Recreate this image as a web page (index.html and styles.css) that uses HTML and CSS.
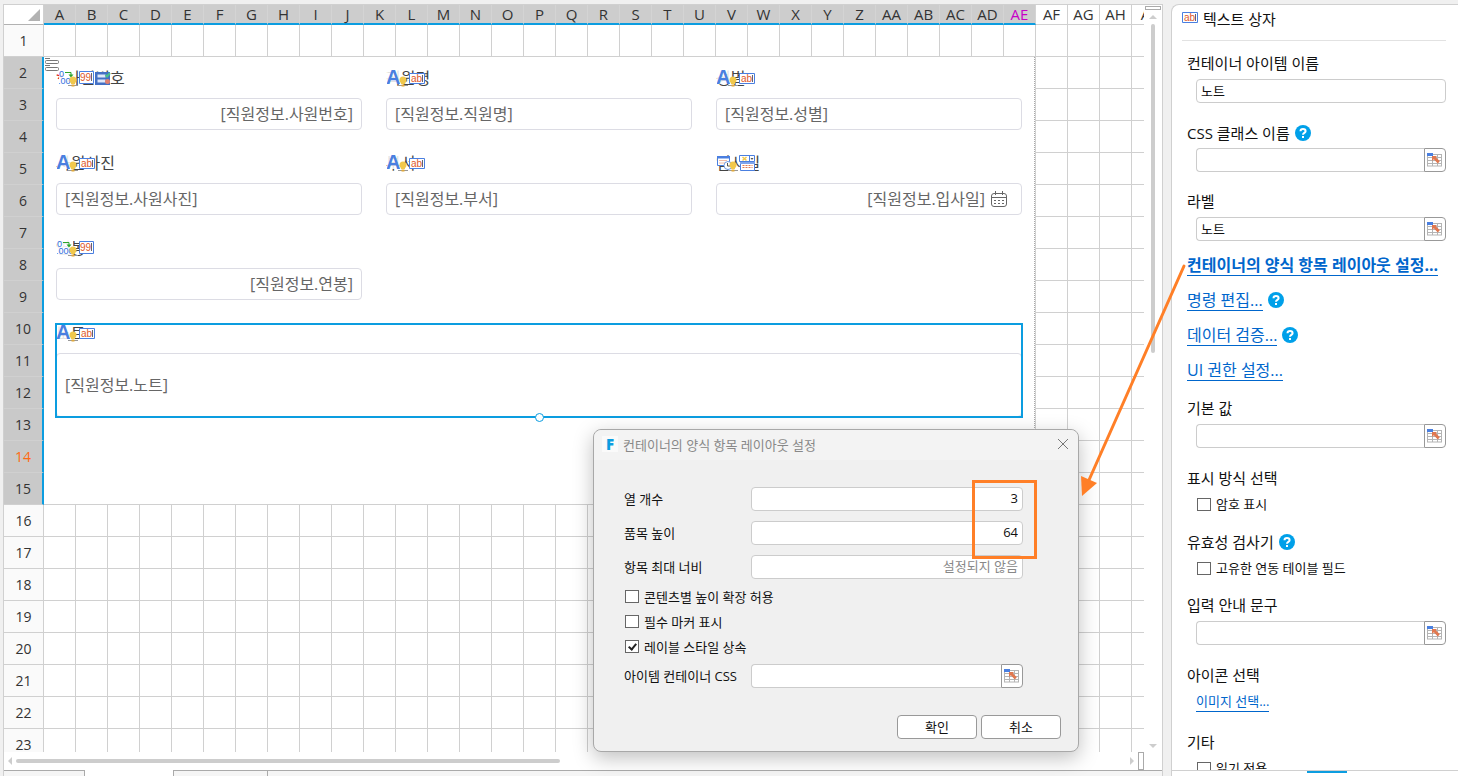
FILE: index.html
```
<!DOCTYPE html>
<html lang="ko">
<head>
    <meta charset="UTF-8">
    <meta name="viewport" content="width=device-width, initial-scale=1.0">
    <title>컨테이너의 양식 항목 레이아웃 설정</title>
    <link rel="stylesheet" href="styles.css">
</head>
<body>
    <!-- shared icons -->
    <svg class="sprite" aria-hidden="true">
        <symbol id="icon-a" viewBox="0 0 16 16">
            <path d="M0 0h14v14H0z" fill="#fff" opacity=".85"/>
            <text x="-1" y="14" class="glyph-a">A</text>
        </symbol>
        <symbol id="icon-number" viewBox="0 0 16 16">
            <path d="M0 0h16v15H0z" fill="#fff" opacity=".9"/>
            <text x="0" y="7" class="glyph-digits">0</text>
            <text x="-1" y="14" class="glyph-digits">.000</text>
            <path d="M6 2.500h6v3" fill="none" stroke="#2aa52a"/>
            <path d="M9.500 4.500h5l-2.500 3z" fill="#2aa52a"/>
        </symbol>
        <symbol id="icon-date" viewBox="0 0 16 16">
            <path d="M.5 1.500h12v9H.5z" fill="#fff" stroke="#4a7fe0"/>
            <path d="M0 1h13v2.500H0z" fill="#4a7fe0"/>
            <path d="M2.500 5.500h8M2.500 8h8" stroke="#e07850" stroke-dasharray="1 1"/>
            <circle cx="11" cy="10.500" r="4" fill="#fff" stroke="#6f9be8"/>
            <path d="M10.500 8v3H13" fill="none" stroke="#555"/>
        </symbol>
        <symbol id="icon-bulb" viewBox="0 0 10 11">
            <path d="M0 9.500h10" stroke="#999"/>
            <path d="M5 .5a3.500 3.500 0 0 1 3.500 3.500c0 1.500-.8 2.500-1.500 3v1H3V7c-.7-.5-1.500-1.500-1.500-3A3.500 3.500 0 0 1 5 .5z" fill="#f1c84c"/>
            <path d="M3.500 9.500h3" stroke="#e0a93a" stroke-width="2"/>
        </symbol>
        <symbol id="icon-ab" viewBox="0 0 16 12">
            <path d="M.5.5h15v10H.5z" fill="#fff" stroke="#4a7fe0"/>
            <text x="2" y="9" class="glyph-box">ab</text>
            <path d="M13.500 2v7" stroke="#666"/>
        </symbol>
        <symbol id="icon-99" viewBox="0 0 16 14">
            <path d="M.5.5h14v12H.5z" fill="#fff" stroke="#4a7fe0"/>
            <text x="1" y="10" class="glyph-box">99</text>
            <path d="M12.500 2v8" stroke="#666"/>
        </symbol>
        <symbol id="icon-list" viewBox="0 0 16 14">
            <path d="M0 0h15v13H0z" fill="#4470c4"/>
            <path d="M2.500 2.500h8v3h-8zM2.500 7.500h8v3h-8z" fill="#dfe8f8"/>
            <path d="M10.500 3l1.500 1.500 3-3.500" fill="none" stroke="#4cc08a" stroke-width="2"/>
            <circle cx="12.500" cy="9.500" r="2.500" fill="#e08070"/>
        </symbol>
        <symbol id="icon-datebox" viewBox="0 0 17 16">
            <path d="M.5.5h15v6H.5z" fill="#fff" stroke="#4a7fe0"/>
            <path d="M10.500 1v5" stroke="#4a7fe0"/>
            <path d="M3.500 2l4 3.500M7.500 2l-4 3.500" stroke="#f1c84c" stroke-width="1.500"/>
            <path d="M11.500 3h3l-1.500 2z" fill="#555"/>
            <path d="M1.500 7.500h14v8h-14z" fill="#fff" stroke="#4a7fe0"/>
            <path d="M1 7h15v2H1z" fill="#7ea4ea"/>
            <path d="M3.500 10.500h10M3.500 12.500h10" stroke="#e07850" stroke-dasharray="2 1"/>
        </symbol>
        <symbol id="icon-cellref" viewBox="0 0 16 14">
            <path d="M0 1.500h15M0 4.500h15M0 7.500h15M0 10.500h15M0 13h15M.5 1v12M5.500 1v12M10.500 1v12M14.500 1v12" stroke="#b4b4b4"/>
            <path d="M0 0h6v3H0z" fill="#4a7fe0"/>
            <path d="M5 3h5L8.800 4.300l4 4-2 2.200-4-4.200L5 8z" fill="#e07850"/>
        </symbol>
        <symbol id="icon-calendar" viewBox="0 0 16 16">
            <rect x=".5" y="2.500" width="15" height="13" rx="2.500" fill="none" stroke="#666"/>
            <path d="M4.500 0v4M11.500 0v4M.5 6.500h15" stroke="#666"/>
            <path d="M3 9.500h10M3 12.500h10" stroke="#666" stroke-dasharray="2 2"/>
        </symbol>
        <symbol id="icon-help" viewBox="0 0 16 16">
            <circle cx="8" cy="8" r="8" fill="#00a0e9"/>
            <path d="M5.500 6.300C5.500 4.700 6.500 4 8 4s2.600.8 2.600 2.200C10.600 7.800 8 7.900 8 9.700" fill="none" stroke="#fff" stroke-width="2"/>
            <path d="M7 11h2v2H7z" fill="#fff"/>
        </symbol>
    </svg>

    <main class="workbook">
        <div class="grid-area">
            <div class="grid">
                <div class="column-heads">
                    <span class="corner"><svg width="12" height="12" viewBox="0 0 12 12"><path d="M12 0v12H0z" fill="#b2b2b2"/></svg></span>
                    <span class="selected">A</span><span class="selected">B</span><span class="selected">C</span><span class="selected">D</span><span class="selected">E</span><span class="selected">F</span><span class="selected">G</span><span class="selected">H</span><span class="selected">I</span><span class="selected">J</span><span class="selected">K</span><span class="selected">L</span><span class="selected">M</span><span class="selected">N</span><span class="selected">O</span><span class="selected">P</span><span class="selected">Q</span><span class="selected">R</span><span class="selected">S</span><span class="selected">T</span><span class="selected">U</span><span class="selected">V</span><span class="selected">W</span><span class="selected">X</span><span class="selected">Y</span><span class="selected">Z</span><span class="selected">AA</span><span class="selected">AB</span><span class="selected">AC</span><span class="selected">AD</span><span class="selected last-column">AE</span><span>AF</span><span>AG</span><span>AH</span><span>AI</span>
                </div>
                <div class="grid-body">
                    <div class="row-heads">
                        <span>1</span>
                        <span class="selected">2</span>
                        <span class="selected">3</span>
                        <span class="selected">4</span>
                        <span class="selected">5</span>
                        <span class="selected">6</span>
                        <span class="selected">7</span>
                        <span class="selected">8</span>
                        <span class="selected">9</span>
                        <span class="selected">10</span>
                        <span class="selected">11</span>
                        <span class="selected">12</span>
                        <span class="selected">13</span>
                        <span class="selected current-row">14</span>
                        <span class="selected">15</span>
                        <span>16</span>
                        <span>17</span>
                        <span>18</span>
                        <span>19</span>
                        <span>20</span>
                        <span>21</span>
                        <span>22</span>
                        <span>23</span>
                    </div>
                    <div class="cells">
                        <form class="container-form">
                            <svg class="form-mark" width="14" height="14" viewBox="0 0 14 14"><path d="M0 .5h5M0 7.500h5" stroke="#777"/><rect x=".5" y="2.500" width="13" height="3" rx="1" fill="#fff" stroke="#777"/><rect x=".5" y="9.500" width="13" height="3" rx="1" fill="#fff" stroke="#777"/></svg>

                            <div class="item">
                                <label for="empNo"><span class="required">*</span>사원번호</label>
                                <svg class="badges" width="56" height="18"><use href="#icon-number" x="2" width="16" height="16"/><use href="#icon-bulb" x="11" y="6" width="10" height="11"/><use href="#icon-99" x="22" y="1" width="16" height="14"/><use href="#icon-list" x="38" y="2" width="16" height="14"/></svg>
                                <div class="box"><input class="number" id="empNo" type="text" value="[직원정보.사원번호]" readonly></div>
                            </div>
                            <div class="item">
                                <label for="empName">직원명</label>
                                <svg class="badges" width="56" height="18"><use href="#icon-a" width="16" height="16"/><use href="#icon-bulb" x="11" y="6" width="10" height="11"/><use href="#icon-ab" x="22" y="3" width="16" height="12"/></svg>
                                <div class="box"><input id="empName" type="text" value="[직원정보.직원명]" readonly></div>
                            </div>
                            <div class="item">
                                <label for="gender">성별</label>
                                <svg class="badges" width="56" height="18"><use href="#icon-a" width="16" height="16"/><use href="#icon-bulb" x="11" y="6" width="10" height="11"/><use href="#icon-ab" x="22" y="3" width="16" height="12"/></svg>
                                <div class="box"><input id="gender" type="text" value="[직원정보.성별]" readonly></div>
                            </div>
                            <div class="item">
                                <label for="photo">사원사진</label>
                                <svg class="badges" width="56" height="18"><use href="#icon-a" width="16" height="16"/><use href="#icon-bulb" x="11" y="6" width="10" height="11"/><use href="#icon-ab" x="22" y="3" width="16" height="12"/></svg>
                                <div class="box"><input id="photo" type="text" value="[직원정보.사원사진]" readonly></div>
                            </div>
                            <div class="item">
                                <label for="dept">부서</label>
                                <svg class="badges" width="56" height="18"><use href="#icon-a" width="16" height="16"/><use href="#icon-bulb" x="11" y="6" width="10" height="11"/><use href="#icon-ab" x="22" y="3" width="16" height="12"/></svg>
                                <div class="box"><input id="dept" type="text" value="[직원정보.부서]" readonly></div>
                            </div>
                            <div class="item">
                                <label for="joined">입사일</label>
                                <svg class="badges" width="56" height="18"><use href="#icon-date" width="16" height="16"/><use href="#icon-bulb" x="11" y="6" width="10" height="11"/><use href="#icon-datebox" x="22" y="0" width="17" height="16"/></svg>
                                <div class="box date"><input class="number" id="joined" type="text" value="[직원정보.입사일]" readonly><svg width="16" height="16"><use href="#icon-calendar"/></svg></div>
                            </div>
                            <div class="item">
                                <label for="salary">연봉</label>
                                <svg class="badges" width="56" height="18"><use href="#icon-number" width="16" height="16"/><use href="#icon-bulb" x="11" y="6" width="10" height="11"/><use href="#icon-99" x="22" y="1" width="16" height="14"/></svg>
                                <div class="box"><input class="number" id="salary" type="text" value="[직원정보.연봉]" readonly></div>
                            </div>
                            <div class="item note">
                                <label for="note">노트</label>
                                <svg class="badges" width="56" height="18"><use href="#icon-a" width="16" height="16"/><use href="#icon-bulb" x="11" y="6" width="10" height="11"/><use href="#icon-ab" x="22" y="3" width="16" height="12"/></svg>
                                <div class="box"><input id="note" type="text" value="[직원정보.노트]" readonly></div>
                                <div class="selection"><i class="handle"></i></div>
                            </div>
                        </form>
                    </div>
                </div>
            </div>
            <div class="scroll-y">
                <i class="splitter"></i>
                <i class="arrow-up"></i>
                <div class="track"><i class="thumb"></i></div>
                <i class="arrow-down"></i>
            </div>
        </div>
        <div class="scroll-x">
            <i class="arrow-left"></i>
            <div class="track"><i class="thumb"></i></div>
            <i class="arrow-right"></i>
            <i class="splitter"></i>
        </div>
        <div class="sheet-tabs"><i class="tab first"></i><i class="tab active"></i><i class="tab"></i><i class="rest"></i></div>
    </main>

    <aside class="panel">
        <div class="panel-body">
            <h2><svg width="16" height="12"><use href="#icon-ab"/></svg>텍스트 상자</h2>

            <div class="field">
                <label for="itemName">컨테이너 아이템 이름</label>
                <div class="control"><input id="itemName" type="text" value="노트"></div>
            </div>
            <div class="field">
                <div class="caption"><label for="cssClass">CSS 클래스 이름</label><svg class="help" width="16" height="16"><use href="#icon-help"/></svg></div>
                <div class="control"><input id="cssClass" type="text"><button type="button" aria-label="셀 참조"><svg width="16" height="14"><use href="#icon-cellref"/></svg></button></div>
            </div>
            <div class="field tight">
                <label for="labelText">라벨</label>
                <div class="control"><input id="labelText" type="text" value="노트"><button type="button" aria-label="셀 참조"><svg width="16" height="14"><use href="#icon-cellref"/></svg></button></div>
            </div>

            <div class="links">
                <div class="caption"><a href="#" class="strong">컨테이너의 양식 항목 레이아웃 설정...</a></div>
                <div class="caption"><a href="#">명령 편집...</a><svg class="help" width="16" height="16"><use href="#icon-help"/></svg></div>
                <div class="caption"><a href="#">데이터 검증...</a><svg class="help" width="16" height="16"><use href="#icon-help"/></svg></div>
                <div class="caption"><a href="#">UI 권한 설정...</a></div>
            </div>

            <div class="field">
                <label for="defaultValue">기본 값</label>
                <div class="control"><input id="defaultValue" type="text"><button type="button" aria-label="셀 참조"><svg width="16" height="14"><use href="#icon-cellref"/></svg></button></div>
            </div>
            <div class="field short">
                <div class="caption">표시 방식 선택</div>
                <label class="check"><input type="checkbox">암호 표시</label>
            </div>
            <div class="field short">
                <div class="caption">유효성 검사기<svg class="help" width="16" height="16"><use href="#icon-help"/></svg></div>
                <label class="check"><input type="checkbox">고유한 연동 테이블 필드</label>
            </div>
            <div class="field">
                <label for="placeholderText">입력 안내 문구</label>
                <div class="control"><input id="placeholderText" type="text"><button type="button" aria-label="셀 참조"><svg width="16" height="14"><use href="#icon-cellref"/></svg></button></div>
            </div>
            <div class="field">
                <div class="caption">아이콘 선택</div>
                <div class="check"><a href="#">이미지 선택...</a></div>
            </div>
            <div class="field">
                <div class="caption">기타</div>
                <label class="check"><input type="checkbox">읽기 전용</label>
            </div>
        </div>
        <div class="panel-tabs"><i></i></div>
    </aside>

    <section class="dialog" role="dialog" aria-labelledby="dialogTitle">
        <header>
            <span class="logo">F</span>
            <h1 id="dialogTitle">컨테이너의 양식 항목 레이아웃 설정</h1>
            <button type="button" class="close" aria-label="닫기"><svg width="12" height="12" viewBox="0 0 12 12"><path d="M1 1l10 10M11 1L1 11" stroke="#777"/></svg></button>
        </header>
        <div class="dialog-body">
            <div class="row">
                <label for="columnCount">열 개수</label>
                <div class="control"><input class="number" id="columnCount" type="text" value="3"></div>
            </div>
            <div class="row">
                <label for="itemHeight">품목 높이</label>
                <div class="control"><input class="number" id="itemHeight" type="text" value="64"></div>
            </div>
            <div class="row">
                <label for="maxWidth">항목 최대 너비</label>
                <div class="control"><input class="number" id="maxWidth" type="text" placeholder="설정되지 않음"></div>
            </div>
            <div class="checks">
                <label><input type="checkbox">콘텐츠별 높이 확장 허용</label>
                <label><input type="checkbox">필수 마커 표시</label>
                <label><input type="checkbox" checked>레이블 스타일 상속</label>
            </div>
            <div class="row">
                <label for="containerCss">아이템 컨테이너 CSS</label>
                <div class="control"><input id="containerCss" type="text"><button type="button" aria-label="셀 참조"><svg width="16" height="14"><use href="#icon-cellref"/></svg></button></div>
            </div>
        </div>
        <footer>
            <button type="button">확인</button>
            <button type="button">취소</button>
        </footer>
        <div class="highlight"></div>
        <svg class="pointer" width="110" height="236" viewBox="0 0 110 236">
            <path d="M105 4L10 218" stroke="#ff7f27" stroke-width="3" stroke-linecap="round"/>
            <path d="M2 214l16 7L3 234z" fill="#ff7f27"/>
        </svg>
    </section>
</body>
</html>
```

FILE: styles.css
```
* {
    box-sizing: border-box;
}

body {
    display: flex;
    gap: 8px;
    height: 100vh;
    margin: 0;
    padding: 4px 0 0 3px;
    overflow: hidden;
    background-color: #f0f0f0;
    color: #111;
    font-family: "Open Sans", "Noto Sans CJK KR", sans-serif;
    font-size: 15px;
}

input,
button {
    font-family: inherit;
    font-size: 13px;
    color: inherit;
}

svg {
    flex-shrink: 0;
}

.sprite {
    display: none;
}

/* spreadsheet */
.workbook {
    flex: 1;
    min-width: 0;
    display: flex;
    flex-direction: column;
    border: 1px solid #d0d0d0;
    border-bottom: none;
    background-color: #fff;
}

.grid-area {
    flex: 1;
    min-height: 0;
    display: flex;
}

.grid {
    flex: 1;
    min-width: 0;
    display: flex;
    flex-direction: column;
}

.column-heads {
    display: flex;
    overflow: hidden;
    line-height: 18px;
    color: #333;
}

.column-heads span {
    flex: 0 0 32px;
    height: 20px;
    border-right: 1px solid #d0d0d0;
    border-bottom: 1px solid #d0d0d0;
    text-align: center;
    white-space: nowrap;
}

.column-heads .corner {
    flex-basis: 40px;
    display: flex;
    justify-content: flex-end;
    align-items: center;
    padding-right: 3px;
    border-bottom-color: #b2b2b2;
}

.column-heads .selected {
    background-color: #cdcdcd;
    border-right-color: #d4d4d4;
    border-bottom: 2px solid #0c9de0;
}

.column-heads .last-column {
    color: #c800c8;
}

.grid-body {
    flex: 1;
    min-height: 0;
    display: flex;
    overflow: hidden;
}

.row-heads {
    width: 40px;
    color: #333;
    font-size: 14px;
    line-height: 31px;
    text-align: center;
}

.row-heads span {
    display: block;
    height: 32px;
    border-right: 1px solid #d0d0d0;
    border-bottom: 1px solid #d0d0d0;
    background-color: #fafafa;
}

.row-heads .selected {
    background-color: #c9c9c9;
    border-right: 2px solid #0c9de0;
}

.row-heads .current-row {
    color: #ff6a13;
}

.cells {
    flex: 1;
    min-width: 0;
    padding-top: 32px;
    overflow: hidden;
    background-image:
        linear-gradient(to right, transparent 31px, #d0d0d0 31px),
        linear-gradient(to bottom, transparent 31px, #d0d0d0 31px);
    background-size: 32px 32px;
}

/* form container placed over B2:AE15 */
.container-form {
    position: relative;
    display: grid;
    grid-template-columns: repeat(3, 1fr);
    align-content: start;
    gap: 21px 24px;
    width: 991px;
    height: 447px;
    padding: 9px 12px;
    border-right: 1px dotted #aaa;
    background-color: #fff;
}

.form-mark {
    position: absolute;
    top: 1px;
    left: 1px;
}

.item {
    position: relative;
}

.item label {
    display: block;
    height: 32px;
    color: #444;
    font-size: 16px;
    line-height: 24px;
}

.required {
    margin-right: 1px;
    color: #e02020;
}

.badges {
    position: absolute;
    top: 4px;
    left: 1px;
}

.box {
    display: flex;
    align-items: center;
    height: 32px;
    padding: 0 8px;
    border: 1px solid #dcdce4;
    border-radius: 4px;
    color: #666;
}

.box input {
    flex: 1;
    min-width: 0;
    padding: 0 0 2px;
    border: none;
    outline: none;
    background: none;
    font-size: 16px;
}

.date {
    gap: 6px;
    padding-right: 14px;
}

.note {
    grid-column: 1 / -1;
}

.note .box {
    height: 64px;
}

.selection {
    position: absolute;
    inset: 2px -1px -1px;
    border: 2px solid #0c9de0;
}

.handle {
    position: absolute;
    bottom: -6px;
    left: 50%;
    width: 9px;
    height: 9px;
    margin-left: -4px;
    border: 1px solid #0c9de0;
    border-radius: 50%;
    background-color: #fff;
}

.number {
    text-align: right;
}

.glyph-a {
    font: bold 20px "Liberation Sans", sans-serif;
    fill: #4a7fe0;
}

.glyph-digits {
    font: 9px "Liberation Sans", sans-serif;
    fill: #2f6fe0;
}

.glyph-box {
    font: 10px "Liberation Sans", sans-serif;
    fill: #e0592b;
}

/* scrollbars */
.scroll-y {
    display: flex;
    flex-direction: column;
    align-items: center;
    width: 18px;
    padding: 1px 0 4px;
}

.scroll-y .splitter {
    width: 16px;
    height: 4px;
    border: 1px solid #aaa;
}

.scroll-y .track {
    flex: 1;
    margin: 5px 0;
}

.scroll-y .thumb {
    display: block;
    width: 4px;
    height: 46%;
    border-radius: 2px;
    background-color: #cdcdcd;
}

.arrow-up,
.arrow-down {
    margin-top: 5px;
    border: 4px solid transparent;
    border-top-width: 0;
    border-bottom-color: #cdcdcd;
}

.arrow-down {
    margin-top: 0;
    border-top: 4px solid #cdcdcd;
    border-bottom: none;
}

.scroll-x {
    display: flex;
    align-items: center;
    height: 18px;
    padding: 0 18px 0 4px;
}

.arrow-left,
.arrow-right {
    border: 4px solid transparent;
    border-left-width: 0;
    border-right-color: #cdcdcd;
}

.arrow-right {
    margin-right: 4px;
    border-left: 4px solid #cdcdcd;
    border-right: none;
}

.scroll-x .track {
    flex: 1;
    margin: 0 4px;
}

.scroll-x .thumb {
    display: block;
    width: 49%;
    height: 4px;
    border-radius: 2px;
    background-color: #cdcdcd;
}

.scroll-x .splitter {
    width: 6px;
    height: 18px;
    border: 1px solid #aaa;
}

.sheet-tabs {
    display: flex;
    height: 6px;
}

.tab {
    width: 94px;
    border: 1px solid #aaa;
    border-width: 1px 0 0 1px;
    background-color: #f5f5f5;
}

.tab.first {
    width: 81px;
    border-width: 1px 1px 0 0;
}

.tab.active {
    width: 88px;
    border: none;
    background-color: #fff;
}

.rest {
    flex: 1;
    border-top: 1px solid #aaa;
    border-left: 1px solid #aaa;
    background-color: #f5f5f5;
}

/* property panel */
.panel {
    display: flex;
    flex-direction: column;
    width: 287px;
    border: 1px solid #d0d0d0;
    border-width: 1px 0 0 1px;
    border-radius: 8px 0 0 0;
    background-color: #fff;
}

.panel-body {
    flex: 1;
    min-height: 0;
    padding: 0 12px 0 15px;
    overflow: hidden;
}

.panel h2 {
    display: flex;
    align-items: center;
    gap: 5px;
    height: 36px;
    margin: 0 0 11px -5px;
    padding-bottom: 9px;
    border-bottom: 1px solid #e2e2e2;
    font-size: 15px;
    font-weight: normal;
}

.field {
    margin-bottom: 18px;
    line-height: 24px;
}

.field.tight {
    margin-bottom: 12px;
}

.field.short {
    margin-bottom: 15px;
}

.field > label,
.caption {
    display: flex;
    align-items: center;
    height: 24px;
}

.field > label {
    padding-bottom: 2px;
}

.help {
    margin-left: 5px;
}

.control {
    display: flex;
    height: 24px;
}

.field .control {
    margin: 3px 0 0 9px;
}

.control input {
    flex: 1;
    min-width: 0;
    padding: 0 4px 2px;
    border: 1px solid #ccc;
    border-radius: 4px;
    outline: none;
    background-color: #fff;
}

.control input:not(:last-child) {
    border-right: none;
    border-radius: 4px 0 0 4px;
}

.control button {
    display: flex;
    align-items: center;
    justify-content: center;
    width: 22px;
    padding: 0;
    border: 1px solid #999;
    border-radius: 0 4px 4px 0;
    background-color: #fff;
}

.links {
    display: flex;
    flex-direction: column;
    gap: 11px;
    margin-bottom: 15px;
    font-size: 16px;
}

.panel a {
    border-bottom: 1px solid #0066cc;
    color: #0066cc;
    line-height: 20px;
    text-decoration: none;
    white-space: nowrap;
}

.panel .strong {
    font-weight: bold;
}

.field > .check {
    display: flex;
    align-items: center;
    height: 22px;
    margin: 3px 0 0 9px;
    padding: 0;
    font-size: 13px;
}

input[type="checkbox"] {
    appearance: none;
    width: 14px;
    height: 13px;
    margin: 0 5px 0 1px;
    border: 1px solid #666;
    background-color: #fff;
}

input[type="checkbox"]:checked::after {
    content: "";
    display: block;
    width: 3px;
    height: 6px;
    margin: 1px 0 0 4px;
    border: solid #222;
    border-width: 0 2px 2px 0;
    transform: rotate(40deg);
}

.panel-tabs {
    height: 6px;
    border-top: 1px solid #d0d0d0;
}

.panel-tabs i {
    display: block;
    width: 40px;
    height: 2px;
    margin-left: 135px;
    background-color: #0c9de0;
}

/* layout settings dialog */
.dialog {
    position: absolute;
    top: 429px;
    left: 593px;
    width: 486px;
    border: 1px solid #a8a8a8;
    border-radius: 8px;
    background-color: #f0f0f0;
    box-shadow: 0 6px 20px rgba(0, 0, 0, 0.25);
    font-size: 13px;
}

.dialog header {
    display: flex;
    align-items: center;
    gap: 5px;
    height: 30px;
    padding: 0 9px 2px 8px;
    border-radius: 8px 8px 0 0;
    background-color: #f3f3f3;
}

.logo {
    width: 16px;
    height: 16px;
    background-color: #fafafa;
    color: #0c9de0;
    font-size: 15px;
    font-weight: 800;
    line-height: 16px;
    text-align: center;
}

.dialog h1 {
    flex: 1;
    margin: 0;
    color: #888;
    font-size: 13px;
    font-weight: normal;
}

.close {
    display: flex;
    padding: 0;
    border: none;
    background: none;
}

.dialog-body {
    padding: 27px 55px 0 30px;
}

.row {
    display: flex;
    align-items: center;
    margin-bottom: 10px;
}

.row label {
    width: 127px;
    padding-bottom: 2px;
    white-space: nowrap;
}

.row .control {
    flex: 1;
}

.dialog ::placeholder {
    color: #888;
}

.checks {
    margin: -5px 0 5px;
}

.checks label {
    display: flex;
    align-items: center;
    height: 25px;
}

.dialog footer {
    display: flex;
    justify-content: flex-end;
    gap: 4px;
    padding: 17px 17px 12px;
}

.dialog footer button {
    width: 80px;
    height: 24px;
    padding: 0 0 2px;
    border: 1px solid #999;
    border-radius: 4px;
    background-color: #fff;
}

.highlight {
    position: absolute;
    top: 50px;
    left: 378px;
    width: 65px;
    height: 79px;
    border: 3px solid #ff7f27;
}

.pointer {
    position: absolute;
    top: -168px;
    left: 485px;
    pointer-events: none;
}
```
